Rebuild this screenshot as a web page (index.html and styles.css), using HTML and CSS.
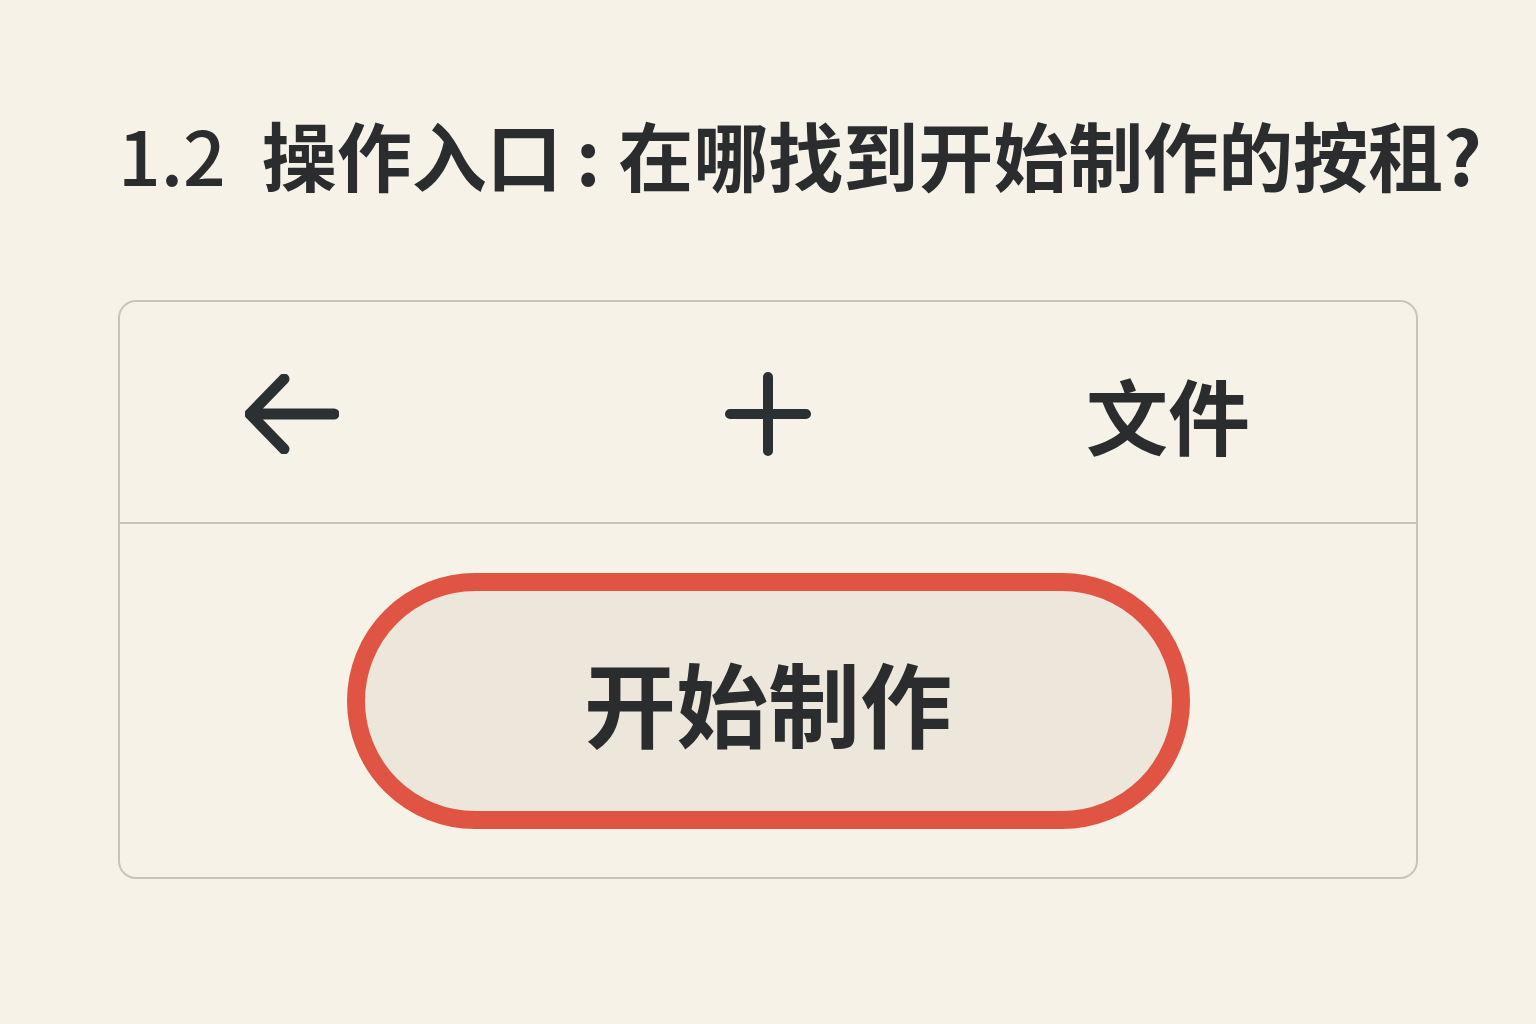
FILE: index.html
```html
<!DOCTYPE html>
<html lang="zh-CN">
<head>
    <meta charset="utf-8">
    <title>操作入口</title>
    <link rel="stylesheet" href="styles.css">
</head>
<body>
    <main class="page">
        <h1 class="section-title"><span class="section-num">1.2</span>操作入口<span class="colon">:</span>在哪找到开始制作的按租?</h1>

        <div class="panel">
            <div class="toolbar">
                <span class="tool tool-back">
                    <svg width="94" height="80" viewBox="0 0 94 80" aria-hidden="true">
                        <path d="M39 5 L5 40 L39 75 M5 40 H89" fill="none" stroke="#2b3133" stroke-width="11" stroke-linecap="round" stroke-linejoin="round"/>
                    </svg>
                </span>
                <span class="tool tool-add">
                    <svg width="86" height="84" viewBox="0 0 86 84" aria-hidden="true">
                        <path d="M43 5 V79 M5 42 H81" fill="none" stroke="#2b3133" stroke-width="10" stroke-linecap="round"/>
                    </svg>
                </span>
                <span class="tool tool-file">文件</span>
            </div>
            <div class="action-area">
                <button class="start-btn">开始制作</button>
            </div>
        </div>
    </main>
</body>
</html>
```

FILE: styles.css
```css
body {
    margin: 0;
    background-color: #f6f2e7;
    color: #2a2c2e;
    font-family: "Noto Sans CJK SC", "Noto Sans", sans-serif;
    height: 100vh;
    overflow: hidden;
}

.page {
    padding: 0 118px;
}

.section-title {
    margin: 0;
    padding-top: 116px;
    font-size: 75px;
    line-height: 1;
    font-weight: 700;
    white-space: nowrap;
    letter-spacing: 0;
}

.section-num {
    margin-right: 36px;
    font-weight: 500;
}

.section-title .colon {
    margin: 0 18px 0 14px;
}

.panel {
    margin-top: 109px;
    width: 1300px;
    box-sizing: border-box;
    height: 579px;
    border: 2px solid #c7c4bc;
    border-radius: 18px;
    display: flex;
    flex-direction: column;
}

.toolbar {
    height: 222px;
    box-sizing: border-box;
    padding-top: 4px;
    display: grid;
    grid-template-columns: 1fr auto 1fr;
    align-items: center;
    border-bottom: 2px solid #c7c4bc;
}

.tool {
    display: flex;
    align-items: center;
}

.tool-back {
    justify-self: start;
    margin-left: 125px;
}

.tool-add {
    justify-self: center;
}

.tool-file {
    justify-self: end;
    margin-right: 166px;
    font-size: 82px;
    font-weight: 700;
    line-height: 1;
}

.action-area {
    flex: 1;
    display: flex;
    align-items: center;
    justify-content: center;
}

.start-btn {
    width: 843px;
    height: 256px;
    box-sizing: border-box;
    border: 18px solid #e05444;
    border-radius: 128px;
    background-color: #ede6da;
    color: #2a2c2e;
    font-family: inherit;
    font-size: 92px;
    font-weight: 700;
    letter-spacing: 0;
    padding: 0;
}
```
